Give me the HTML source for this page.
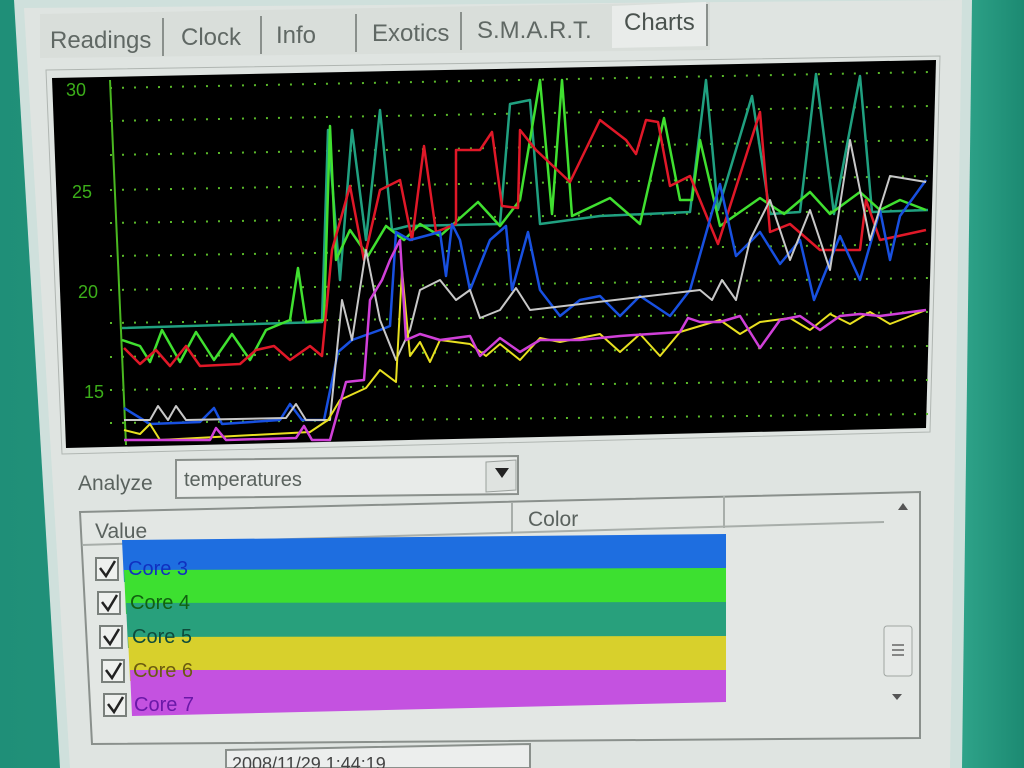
<!DOCTYPE html>
<html><head><meta charset="utf-8"><style>
html,body{margin:0;padding:0;width:1024px;height:768px;overflow:hidden;background:#2a9a84}
svg{display:block}
text{font-family:"Liberation Sans",sans-serif}
</style></head><body>
<svg width="1024" height="768" viewBox="0 0 1024 768" xmlns="http://www.w3.org/2000/svg">
<defs>
<linearGradient id="bgL" x1="0" x2="1"><stop offset="0" stop-color="#1f8f78"/><stop offset="1" stop-color="#3aa88e"/></linearGradient>
<linearGradient id="bgR" x1="0" x2="1"><stop offset="0" stop-color="#2fa48a"/><stop offset="1" stop-color="#1c8a72"/></linearGradient>
<pattern id="grid" width="14" height="25" patternUnits="userSpaceOnUse"><rect x="0" y="0" width="3" height="2" fill="#3a9a1a"/></pattern>
</defs>
<rect width="1024" height="768" fill="url(#bgL)"/>
<rect x="960" y="0" width="64" height="768" fill="url(#bgR)"/>
<!-- window -->
<polygon points="14,0 972,0 962,768 60,768" fill="#cfe0dc"/>
<polygon points="24,8 962,0 950,768 70,768" fill="#dfe4e1"/>
<!-- tab strip -->
<polygon points="40,14 710,2 710,50 40,58" fill="#d9deda"/>
<polygon points="612,6 706,2 708,46 612,48" fill="#e9ecea"/>
<g fill="#606864" font-size="24">
<text x="50" y="48">Readings</text>
<text x="181" y="45">Clock</text>
<text x="276" y="43">Info</text>
<text x="372" y="41">Exotics</text>
<text x="477" y="38">S.M.A.R.T.</text>
<text x="624" y="30" fill="#4a524e">Charts</text>
</g>
<g stroke="#8a908c" stroke-width="2">
<line x1="163" y1="18" x2="163" y2="56"/><line x1="261" y1="16" x2="261" y2="54"/>
<line x1="356" y1="14" x2="356" y2="52"/><line x1="461" y1="12" x2="461" y2="50"/>
<line x1="707" y1="4" x2="707" y2="46"/>
</g>
<!-- chart -->
<polygon points="46,70 940,56 930,432 62,454" fill="#dfe4e1" stroke="#b0b6b2"/>
<polygon points="52,78 936,60 926,428 66,448" fill="#000"/>
<g stroke="#5ab82a" stroke-width="2" stroke-dasharray="2 10">
<line x1="110" y1="88" x2="930" y2="72"/><line x1="110" y1="121" x2="930" y2="106"/>
<line x1="110" y1="155" x2="930" y2="140"/><line x1="110" y1="190" x2="930" y2="176"/>
<line x1="110" y1="223" x2="930" y2="210"/><line x1="110" y1="256" x2="930" y2="244"/>
<line x1="110" y1="290" x2="930" y2="278"/><line x1="110" y1="323" x2="930" y2="312"/>
<line x1="110" y1="357" x2="930" y2="346"/><line x1="110" y1="390" x2="930" y2="380"/>
<line x1="110" y1="423" x2="930" y2="414"/>
</g>
<line x1="110" y1="80" x2="126" y2="445" stroke="#4ab820" stroke-width="2"/>
<g fill="#3cae1a" font-size="18"><text x="66" y="96">30</text><text x="72" y="198">25</text><text x="78" y="298">20</text><text x="84" y="398">15</text></g>
<g fill="none" stroke-width="2.5" stroke-linejoin="round">
<polyline stroke="#20a080" points="122,328 322,322 328,130 340,280 352,130 366,240 380,110 392,230 408,226 500,224 510,104 530,100 540,224 600,216 690,212 706,80 718,210 752,96 770,214 800,212 816,74 834,214 860,76 872,212 928,210"/>
<polyline stroke="#40e030" points="122,340 140,346 150,362 162,330 180,362 196,332 214,360 232,334 250,360 266,330 290,320 298,268 306,322 324,320 330,126 336,260 350,230 368,256 386,226 404,240 420,224 440,236 478,202 500,226 520,200 540,80 552,214 562,80 572,216 610,198 640,224 664,118 680,200 692,200 700,140 720,226 760,198 784,214 810,192 830,214 860,192 880,210 900,200 926,210"/>
<polyline stroke="#e01828" points="124,348 140,364 156,350 170,366 186,346 200,366 240,364 256,350 274,346 290,360 310,346 322,356 332,250 350,186 364,260 380,190 400,180 412,240 424,146 436,232 456,224 456,150 480,150 492,132 502,206 518,208 520,130 536,150 570,182 600,120 626,140 636,154 646,120 658,122 670,186 690,176 700,200 718,244 760,112 770,232 790,224 820,250 860,250 866,200 880,240 926,230"/>
<polyline stroke="#1850e0" points="124,408 150,424 200,422 214,408 222,424 280,420 290,404 302,420 324,420 338,352 352,340 380,330 390,326 396,232 410,240 440,232 446,276 452,224 460,240 470,290 490,240 506,226 512,290 528,232 540,290 560,316 580,300 600,296 620,316 640,296 670,316 690,290 720,184 736,256 760,232 780,264 800,240 814,300 840,236 860,280 880,210 890,260 900,216 926,180"/>
<polyline stroke="#c8c8c8" stroke-width="2" points="124,420 150,420 158,406 168,420 176,406 186,420 286,418 296,404 306,420 330,420 342,300 352,340 366,250 380,320 396,360 410,330 420,290 440,280 456,300 470,290 480,318 500,310 516,288 530,310 700,290 712,300 722,280 736,300 750,240 770,200 790,260 810,210 830,270 850,140 870,240 890,176 926,182"/>
<polyline stroke="#e8e020" stroke-width="2" points="124,430 140,434 150,424 160,440 310,432 328,420 340,400 366,388 380,370 396,382 402,270 410,356 420,342 430,362 440,340 470,344 486,356 500,344 520,360 540,338 560,342 600,334 620,352 640,334 660,356 680,332 720,320 740,334 760,322 790,318 810,330 830,314 850,324 870,312 890,324 926,310"/>
<polyline stroke="#d040d8" points="124,440 210,440 216,428 226,440 296,438 304,426 312,440 330,440 346,382 364,380 370,300 382,280 390,260 400,240 406,340 420,334 440,340 470,336 480,356 500,338 520,352 540,340 560,340 580,340 620,336 680,332 688,318 700,322 720,322 740,316 760,348 780,320 800,316 820,330 840,316 860,314 880,316 926,310"/>
</g>
<!-- analyze -->
<text x="78" y="490" font-size="21" fill="#5a625e">Analyze</text>
<polygon points="176,460 518,456 518,494 176,498" fill="#e8ebe9" stroke="#8a908c" stroke-width="2"/>
<text x="184" y="486" font-size="20" fill="#5a625e">temperatures</text>
<polygon points="486,462 516,460 516,490 486,492" fill="#dfe3e0" stroke="#9aa09c"/>
<polygon points="495,468 509,468 502,478" fill="#222"/>
<!-- list -->
<polygon points="80,512 920,492 920,738 92,744" fill="#e3e7e4" stroke="#8a908c" stroke-width="2"/>
<line x1="82" y1="545" x2="884" y2="522" stroke="#a8aeaa" stroke-width="2"/>
<line x1="512" y1="502" x2="512" y2="533" stroke="#a8aeaa" stroke-width="2"/>
<line x1="724" y1="496" x2="724" y2="528" stroke="#a8aeaa" stroke-width="2"/>
<text x="95" y="538" font-size="21" fill="#5a625e">Value</text>
<text x="528" y="526" font-size="21" fill="#5a625e">Color</text>
<polygon points="122,540 726,534 726,570 124,582" fill="#1e6ee0"/>
<polygon points="124,570 726,568 726,603 126,614" fill="#3de030"/>
<polygon points="126,603 726,602 726,637 128,648" fill="#28a07c"/>
<polygon points="128,637 726,636 726,670 130,681" fill="#d8d02c"/>
<polygon points="130,670 726,670 726,702 132,716" fill="#c452e0"/>
<g font-size="20">
<text x="128" y="575" fill="#1030c0">Core 3</text>
<text x="130" y="609" fill="#106010">Core 4</text>
<text x="132" y="643" fill="#0e4a3a">Core 5</text>
<text x="133" y="677" fill="#6a5a10">Core 6</text>
<text x="134" y="711" fill="#6a18a8">Core 7</text>
</g>
<g fill="#eef0ee" stroke="#7a807c" stroke-width="2">
<rect x="96" y="558" width="22" height="22"/><rect x="98" y="592" width="22" height="22"/>
<rect x="100" y="626" width="22" height="22"/><rect x="102" y="660" width="22" height="22"/>
<rect x="104" y="694" width="22" height="22"/>
</g>
<g fill="none" stroke="#222" stroke-width="2.5">
<polyline points="100,568 106,576 115,561"/><polyline points="102,602 108,610 117,595"/>
<polyline points="104,636 110,644 119,629"/><polyline points="106,670 112,678 121,663"/>
<polyline points="108,704 114,712 123,697"/>
</g>
<!-- scrollbar -->
<polygon points="898,510 908,510 903,503" fill="#555"/>
<rect x="884" y="626" width="28" height="50" rx="3" fill="#e6e9e7" stroke="#a0a6a2"/>
<g stroke="#666" stroke-width="1.5"><line x1="892" y1="645" x2="904" y2="645"/><line x1="892" y1="650" x2="904" y2="650"/><line x1="892" y1="655" x2="904" y2="655"/></g>
<polygon points="892,694 902,694 897,700" fill="#555"/>
<!-- date -->
<polygon points="226,750 530,744 530,768 226,768" fill="#eceeed" stroke="#8a908c" stroke-width="2"/>
<text x="232" y="770" font-size="18" fill="#444">2008/11/29 1:44:19</text>
</svg>
</body></html>
